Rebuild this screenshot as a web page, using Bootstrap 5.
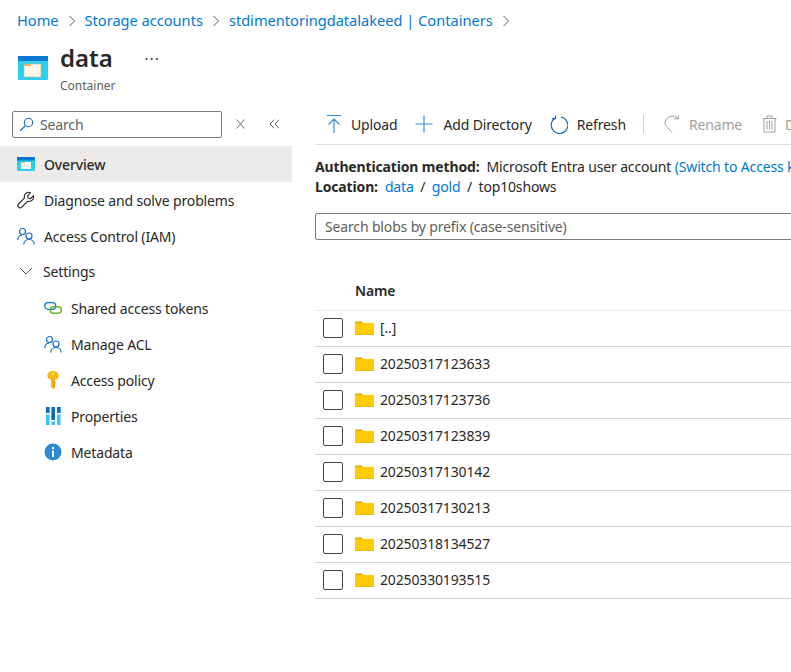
<!DOCTYPE html>
<html lang="en">
<head>
  <meta charset="UTF-8" />
  <meta name="viewport" content="width=device-width, initial-scale=1.0" />
  <title>data - Container</title>
  <link href="https://cdn.jsdelivr.net/npm/bootstrap@5.3.3/dist/css/bootstrap.min.css" rel="stylesheet" />
  <style>
    html, body { height: 100%; overflow: hidden; }
    body { font-family: "Noto Sans", "Open Sans", sans-serif; font-size: 14px; letter-spacing: -0.15px; color: #292827; background: #fff; width: 791px; }
    a { color: #0078d4; text-decoration: none; }
    .crumbs { height: 42px; padding-left: 17px; font-size: 14.6px; letter-spacing: 0; gap: 9px; white-space: nowrap; }
    .crumbs svg { flex: none; }
    .page-head { height: 62px; padding-left: 18px; }
    .head-icon { margin-top: 13px; margin-right: 12px; flex: none; }
    .page-title { font-size: 24px; font-weight: 600; line-height: 32px; margin: 0; color: #292827; letter-spacing: 0; }
    .page-sub { font-size: 12px; line-height: 16px; color: #605e5c; margin-top: 4px; letter-spacing: 0; }
    .head-more { margin-left: 29px; margin-top: 10px; line-height: 14px; letter-spacing: 1.5px; color: #292827; }
    .side-col { width: 292px; flex: none; }
    .side-search { padding: 0 0 2px 12px; height: 42px; }
    .side-box { width: 210px; height: 27px; border: 1px solid #7a7a7a; border-radius: 2px; padding-left: 6px; gap: 6px; color: #605e5c; }
    .side-clear { margin-left: 14px; }
    .side-fold { margin-left: 24px; }
    .side-item { height: 36px; padding-left: 17px; gap: 9px; color: #292827; white-space: nowrap; }
    .side-item.active { background: #edebe9; font-weight: 500; }
    .side-item.sub { padding-left: 44px; }
    .side-item.group { padding-bottom: 2px; }
    .side-chev { margin-left: 2px; margin-right: 1px; }
    .main-col { flex: 1; min-width: 0; padding-left: 23px; overflow: hidden; }
    .tool-bar { height: 41px; border-bottom: 1px solid #e1dfdd; white-space: nowrap; width: 600px; padding-left: 10px; }
    .tool-btn { gap: 8px; margin-right: 17px; }
    .tool-btn.wide { gap: 11px; }
    .tool-btn.tight { gap: 9px; }
    .tool-btn.off { color: #a19f9d; margin-right: 20px; }
    .tool-sep { width: 1px; height: 20px; background: #d2d0ce; margin-right: 19px; }
    .info-block { padding-top: 12px; }
    .auth-line { line-height: 20px; white-space: nowrap; width: 600px; }
    .sep-gap { margin: 0 3px; }
    .blob-search { width: 600px; height: 27px; border: 1px solid #7a7a7a; border-radius: 2px; margin-top: 16px; padding-left: 9px; color: #605e5c; line-height: 25px; }
    .blob-head { height: 44px; margin-top: 27px; padding: 3px 0 0 40px; border-bottom: 1px solid #edebe9; font-weight: 600; width: 600px; }
    .blob-row { height: 36px; border-bottom: 1px solid #d2d0ce; width: 600px; padding: 0 0 2px 8px; }
    .blob-check { width: 20px; height: 20px; border: 1px solid #444; border-radius: 2px; margin-right: 12px; flex: none; }
    .blob-name { margin-left: 6px; }
  </style>
</head>
<body>
  <nav class="crumbs d-flex align-items-center">
    <a href="#">Home</a>
    <svg width="8" height="12" viewBox="0 0 8 12"><path d="M1.5 1l5 5-5 5" fill="none" stroke="#605e5c"/></svg>
    <a href="#">Storage accounts</a>
    <svg width="8" height="12" viewBox="0 0 8 12"><path d="M1.5 1l5 5-5 5" fill="none" stroke="#605e5c"/></svg>
    <a href="#">stdimentoringdatalakeed | Containers</a>
    <svg width="8" height="12" viewBox="0 0 8 12"><path d="M1.5 1l5 5-5 5" fill="none" stroke="#605e5c"/></svg>
  </nav>

  <header class="page-head d-flex align-items-start">
    <svg class="head-icon" width="30" height="26" viewBox="0 0 30 26">
      <rect x="0" y="1" width="30" height="24" rx="1" fill="#2bd0f0"/>
      <rect x="0" y="1" width="30" height="5" fill="#0a78d4"/>
      <rect x="6" y="9" width="17" height="13" fill="#fdf6e8" stroke="#c9b48c" stroke-width=".6"/>
      <rect x="6" y="9" width="7" height="2" fill="#f2b36c"/>
    </svg>
    <div>
      <h1 class="page-title">data</h1>
      <div class="page-sub">Container</div>
    </div>
    <span class="head-more">···</span>
  </header>

  <div class="d-flex">
    <aside class="side-col">
      <div class="side-search d-flex align-items-center">
        <div class="side-box d-flex align-items-center">
          <svg width="15" height="15" viewBox="0 0 15 15"><circle cx="9.5" cy="5.5" r="4.2" fill="none" stroke="#0f6cbd" stroke-width="1.1"/><path d="M6.4 8.6L1.2 13.8" stroke="#0f6cbd" stroke-width="1.3"/></svg>
          <span>Search</span>
        </div>
        <svg class="side-clear" width="9" height="10" viewBox="0 0 9 10"><path d="M.5 .5l8 9M8.5 .5l-8 9" stroke="#605e5c" stroke-width=".9" fill="none"/></svg>
        <svg class="side-fold" width="11" height="10" viewBox="0 0 11 10"><path d="M5 .8L1 5l4 4.2M10 .8L6 5l4 4.2" stroke="#605e5c" fill="none"/></svg>
      </div>

      <div class="side-item active d-flex align-items-center">
        <svg width="18" height="14" viewBox="0 0 18 14"><rect y="0" width="18" height="14" rx="1" fill="#2bd0f0"/><rect width="18" height="3.5" fill="#0a78d4"/><rect x="4" y="5" width="10" height="7" fill="#fdf6e8"/><rect x="4" y="5" width="4" height="1.2" fill="#f2b36c"/></svg>
        <span>Overview</span>
      </div>
      <div class="side-item d-flex align-items-center">
        <svg width="18" height="18" viewBox="0 0 18 18"><path d="M11.8 1.2a4.4 4.4 0 0 0-4.3 5.7L1.6 13a2.2 2.2 0 0 0 3.2 3.2l6-6a4.4 4.4 0 0 0 5.600-5.400l-3 2.900-2.300-.6-.6-2.300 3-2.900a4.400 4.400 0 0 0-1.700-.7z" fill="none" stroke="#292827" stroke-width="1.1"/></svg>
        <span>Diagnose and solve problems</span>
      </div>
      <div class="side-item d-flex align-items-center">
        <svg width="18" height="18" viewBox="0 0 18 18"><circle cx="5.5" cy="4.5" r="3" fill="none" stroke="#0f6cbd" stroke-width="1.2"/><path d="M.8 13c0-3 2-4.800 4.200-4.800" fill="none" stroke="#0f6cbd" stroke-width="1.2"/><circle cx="12" cy="9" r="3" fill="none" stroke="#0f6cbd" stroke-width="1.2"/><path d="M6.8 17.5c0-3 2.200-5 5.200-5s5.200 2 5.200 5" fill="none" stroke="#0f6cbd" stroke-width="1.2"/></svg>
        <span>Access Control (IAM)</span>
      </div>
      <div class="side-item group d-flex align-items-center">
        <svg class="side-chev" width="14" height="8" viewBox="0 0 14 8"><path d="M1 1l6 6 6-6" fill="none" stroke="#605e5c"/></svg>
        <span>Settings</span>
      </div>
      <div class="side-item sub d-flex align-items-center">
        <svg width="18" height="12" viewBox="0 0 18 12"><rect x=".7" y=".7" width="11" height="6.6" rx="3.3" fill="none" stroke="#0f78d4" stroke-width="1.3"/><rect x="6.3" y="4.7" width="11" height="6.6" rx="3.3" fill="none" stroke="#6bb130" stroke-width="1.5"/></svg>
        <span>Shared access tokens</span>
      </div>
      <div class="side-item sub d-flex align-items-center">
        <svg width="18" height="18" viewBox="0 0 18 18"><circle cx="5.5" cy="4.5" r="3" fill="none" stroke="#0f6cbd" stroke-width="1.2"/><path d="M.8 13c0-3 2-4.800 4.200-4.800" fill="none" stroke="#0f6cbd" stroke-width="1.2"/><circle cx="12" cy="9" r="3" fill="none" stroke="#0f6cbd" stroke-width="1.2"/><path d="M6.8 17.5c0-3 2.200-5 5.200-5s5.200 2 5.200 5" fill="none" stroke="#0f6cbd" stroke-width="1.2"/></svg>
        <span>Manage ACL</span>
      </div>
      <div class="side-item sub d-flex align-items-center">
        <svg width="18" height="18" viewBox="0 0 18 18"><path d="M9 0a5.500 4.700 0 0 1 2 9.100V16l-2 2-2-2V9.100A5.500 4.700 0 0 1 9 0z" fill="#fdb813"/><path d="M9 9h2v7l-2 2z" fill="#f29b05"/><rect x="9" y="11" width="3" height="1.4" fill="#f29b05"/><circle cx="9" cy="3" r="1.2" fill="#ffe9a3"/></svg>
        <span>Access policy</span>
      </div>
      <div class="side-item sub d-flex align-items-center">
        <svg width="18" height="18" viewBox="0 0 18 18"><rect x="2" y="0" width="3.5" height="18" fill="#38c6ee"/><rect x="2" y="0" width="3.5" height="6" fill="#0f6cbd"/><rect x="2" y="6" width="3.5" height="1.5" fill="#fff"/><rect x="7.5" y="0" width="3.5" height="18" fill="#38c6ee"/><rect x="7.5" y="0" width="3.5" height="13" fill="#0f6cbd"/><rect x="7.5" y="13" width="3.5" height="1.5" fill="#fff"/><rect x="13" y="0" width="3.5" height="18" fill="#38c6ee"/><rect x="13" y="0" width="3.5" height="6" fill="#0f6cbd"/><rect x="13" y="6" width="3.5" height="1.5" fill="#fff"/></svg>
        <span>Properties</span>
      </div>
      <div class="side-item sub d-flex align-items-center">
        <svg width="18" height="18" viewBox="0 0 18 18"><circle cx="9" cy="9" r="8.5" fill="#2a8ad8"/><rect x="8" y="7.5" width="2" height="6.5" fill="#fff"/><circle cx="9" cy="5" r="1.2" fill="#fff"/></svg>
        <span>Metadata</span>
      </div>
    </aside>

    <main class="main-col">
      <div class="tool-bar d-flex align-items-center">
        <span class="tool-btn d-inline-flex align-items-center">
          <svg width="18" height="20" viewBox="0 0 18 20"><path d="M2 1.5h14M9 19V5M3.5 10.5L9 5l5.5 5.5" fill="none" stroke="#2b88d8" stroke-width="1.1"/></svg>
          Upload
        </span>
        <span class="tool-btn wide d-inline-flex align-items-center">
          <svg width="18" height="18" viewBox="0 0 18 18"><path d="M9 .5v17M.5 9h17" stroke="#2b88d8" stroke-width="1.1"/></svg>
          Add Directory
        </span>
        <span class="tool-btn tight d-inline-flex align-items-center">
          <svg width="19" height="19" viewBox="0 0 19 19"><path d="M6 3.2A8.3 8.3 0 1 0 12 2" fill="none" stroke="#0f6cbd" stroke-width="1.2"/><path d="M6.5 .5V3.6H3" fill="none" stroke="#0f6cbd" stroke-width="1.2"/></svg>
          Refresh
        </span>
        <span class="tool-sep"></span>
        <span class="tool-btn off d-inline-flex align-items-center">
          <svg width="18" height="18" viewBox="0 0 18 18"><path d="M15 3.5A7.5 7.5 0 0 0 2 8c0 2.500 2 4 4 6l3 3.500M11 3.800h4.500V.5" fill="none" stroke="#a19f9d" stroke-width="1"/></svg>
          Rename
        </span>
        <span class="tool-btn off d-inline-flex align-items-center">
          <svg width="15" height="18" viewBox="0 0 15 18"><path d="M.5 3.500h14M5 3.500V1h5v2.500M2 3.500V17h11V3.500M5 6v8.500M7.500 6v8.500M10 6v8.500" fill="none" stroke="#a19f9d" stroke-width="1"/></svg>
          Delete
        </span>
      </div>

      <div class="info-block">
        <div class="auth-line"><strong>Authentication method:</strong>&nbsp; Microsoft Entra user account <a href="#">(Switch to Access key)</a></div>
        <div class="auth-line"><strong>Location:</strong>&nbsp; <a href="#">data</a> <span class="sep-gap">/</span> <a href="#">gold</a> <span class="sep-gap">/</span> top10shows</div>
      </div>

      <div class="blob-search">Search blobs by prefix (case-sensitive)</div>

      <div class="blob-head d-flex align-items-center">Name</div>
      <div id="blobRows"></div>
    </main>
  </div>

  <script>
    const names = ["[..]", "20250317123633", "20250317123736", "20250317123839", "20250317130142", "20250317130213", "20250318134527", "20250330193515"];
    const folder = `<svg width="19" height="16" viewBox="0 0 19 16"><path d="M0 2.500a1 1 0 0 1 1-1h6l2 2h-9z" fill="#e8a800"/><rect y="3" width="19" height="12" fill="#ffcb05"/><rect y="14.200" width="19" height=".8" fill="#e8b400"/></svg>`;
    document.getElementById("blobRows").innerHTML = names.map(n => `
      <div class="blob-row d-flex align-items-center">
        <span class="blob-check"></span>
        ${folder}
        <span class="blob-name">${n}</span>
      </div>`).join("");
  </script>
  <script src="https://cdn.jsdelivr.net/npm/bootstrap@5.3.3/dist/js/bootstrap.bundle.min.js"></script>
</body>
</html>
